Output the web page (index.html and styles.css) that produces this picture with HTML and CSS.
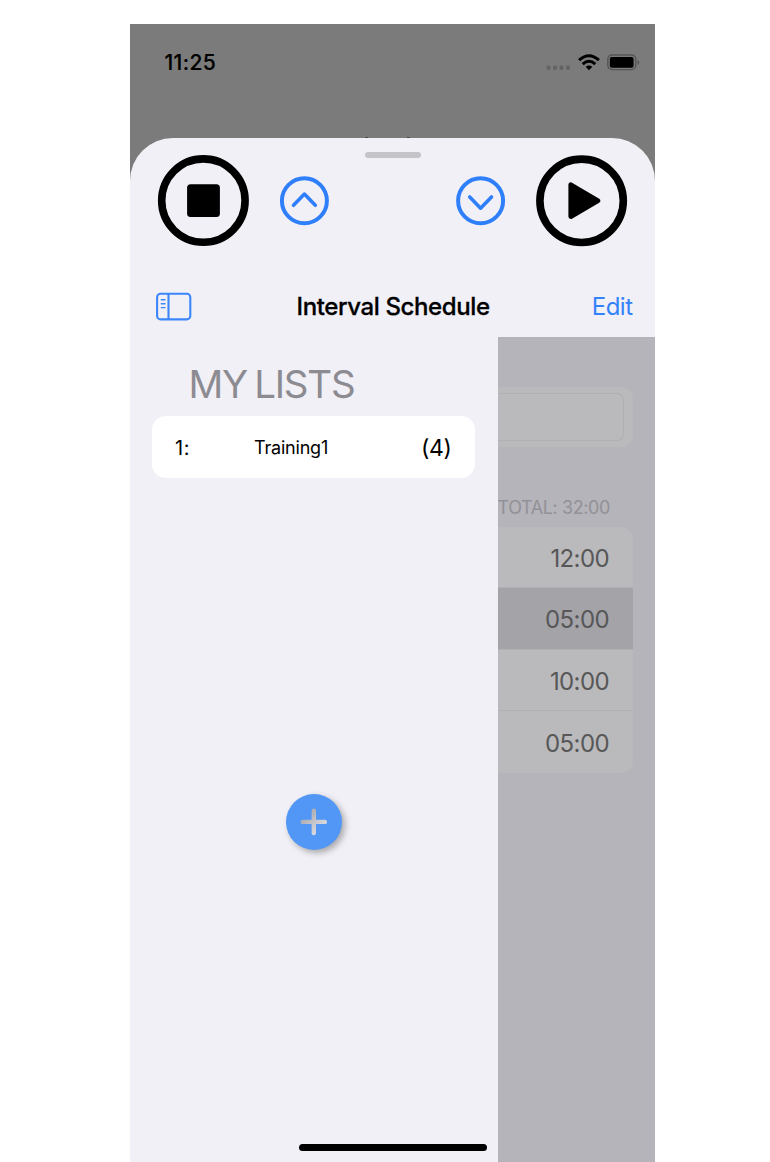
FILE: index.html
```html
<!DOCTYPE html>
<html lang="en">
<head>
<meta charset="utf-8">
<title>Interval Schedule</title>
<link rel="stylesheet" href="styles.css">
</head>
<body>
<main class="phone">
  <header class="status">
    <span class="clock">11:25</span>
    <div class="indicators">
      <svg class="signal" width="26" height="6" viewBox="0 0 26 6"><g fill="#646464"><rect x=".5" y=".5" width="4" height="4.4" rx="1.4"/><rect x="7" y=".5" width="4" height="4.4" rx="1.4"/><rect x="13.500" y=".5" width="4" height="4.4" rx="1.4"/><rect x="20" y=".5" width="4" height="4.4" rx="1.4"/></g></svg>
      <svg class="wifi" width="22" height="18" viewBox="0 0 22 18"><g fill="none" stroke="#000" stroke-width="3"><path d="M1.100 6.100Q11 -2.700 20.900 6.100"/><path d="M4.700 10.100Q11 4.500 17.300 10.100"/></g><path d="M7.700 12.700Q11 10.200 14.300 12.700L11 16.300Z"/></svg>
      <svg class="battery" width="33" height="17" viewBox="0 0 33 17"><rect x=".8" y="1" width="28" height="14.600" rx="4.300" fill="none" stroke="#555" stroke-width="1.400"/><rect x="2.800" y="3" width="23.800" height="10.800" rx="2"/><path d="M30.600 6v5q1.700-.7 1.700-2.500T30.600 6" fill="#555"/></svg>
    </div>
  </header>
  <div class="behind"><i></i><i></i></div>
  <section class="sheet">
    <div class="grabber"></div>
    <div class="controls">
      <svg class="stop" width="92" height="92" viewBox="0 0 92 92"><circle cx="46.400" cy="45.600" r="41.700" fill="none" stroke="#000" stroke-width="7.600"/><rect x="30.100" y="29.300" width="32.800" height="32.800" rx="3.500"/></svg>
      <svg class="up" width="50" height="50" viewBox="0 0 50 50"><g fill="none" stroke="#2f7ffb" stroke-width="4" stroke-linecap="round" stroke-linejoin="round"><circle cx="25.400" cy="24.700" r="22.500"/><path d="M14.500 29.300 25.400 18.100 36.300 29.300" stroke-width="3.600"/></g></svg>
      <svg class="down" width="50" height="50" viewBox="0 0 50 50"><g fill="none" stroke="#2f7ffb" stroke-width="4" stroke-linecap="round" stroke-linejoin="round"><circle cx="24.600" cy="24.700" r="22.500"/><path d="M13.700 21 24.600 32.200 35.500 21" stroke-width="3.600"/></g></svg>
      <svg class="play" width="92" height="92" viewBox="0 0 92 92"><circle cx="45.600" cy="45.800" r="41.700" fill="none" stroke="#000" stroke-width="7.600"/><path d="M34.800 29.800V61.600L62 45.700Z" stroke="#000" stroke-width="4.800" stroke-linejoin="round"/></svg>
    </div>
    <nav class="nav">
      <svg class="side-icon" width="37" height="29" viewBox="0 0 37 29"><g fill="none" stroke="#3b86fa" stroke-width="2.100"><rect x="2.100" y="1.800" width="33.200" height="25.600" rx="3.500"/><path d="M13.500 2v25"/><path d="M6.300 7.800h3.700M6.300 11.700h3.700M6.300 15.600h3.700" stroke-width="1.400" stroke-linecap="round"/></g></svg>
      <h1 class="title">Interval Schedule</h1>
      <a class="edit">Edit</a>
    </nav>
    <div class="content">
      <aside class="sidebar">
        <h2 class="heading">MY LISTS</h2>
        <div class="card">
          <span class="index">1:</span><span class="name">Training1</span><span class="count">(4)</span>
        </div>
        <button class="add"><svg width="56" height="56" viewBox="0 0 56 56"><defs><linearGradient id="plus" x1="0" y1="0" x2="1" y2="1"><stop offset=".2" stop-color="#aaabb0"/><stop offset=".8" stop-color="#dddde2"/></linearGradient></defs><path d="M25.600 16.800a2.200 2.200 0 0 1 4.400 0v8.900h8.900a2.200 2.200 0 0 1 0 4.400h-8.900v9a2.200 2.200 0 0 1-4.400 0v-9h-8.900a2.200 2.200 0 0 1 0-4.400h8.900Z" fill="url(#plus)"/></svg></button>
      </aside>
      <section class="detail">
        <div class="search"><div class="field"></div></div>
        <p class="total"><span>TOTAL: 32:00</span></p>
        <ul class="times">
          <li><span>12:00</span></li>
          <li class="selected"><span>05:00</span></li>
          <li><span>10:00</span></li>
          <li><span>05:00</span></li>
        </ul>
      </section>
      <div class="home"></div>
    </div>
  </section>
</main>
</body>
</html>
```
FILE: styles.css
```css
* { box-sizing: border-box; }
body { margin: 0; background: #fff; font-family: Inter, "Liberation Sans", sans-serif; color: #000; overflow: hidden; }
svg { display: block; flex: none; }
.phone { width: 525px; height: 1137.5px; margin: 24px 0 0 130px; background: #7b7b7b; display: flex; flex-direction: column; overflow: hidden; }
.status { height: 112px; flex: none; display: flex; justify-content: space-between; align-items: flex-start; padding: 26px 15px 0 34.5px; }
.clock { font-size: 21px; line-height: 26px; font-weight: 500; -webkit-text-stroke: 0.2px #000; letter-spacing: 0.4px; }
.indicators { display: flex; align-items: flex-start; padding-top: 4px; }
.signal { margin: 11px 6px 0 0; }
.wifi { margin-right: 7px; }
.behind { height: 2px; flex: none; display: flex; gap: 39px; padding: 1px 0 0 235px; }
.behind i { width: 3px; height: 1px; background: #4c4c4c; }
.sheet { flex: 1; background: #f1f0f6; border-radius: 43px 43px 0 0; display: flex; flex-direction: column; overflow: hidden; }
.grabber { width: 56px; height: 6px; flex: none; margin: 14px 0 0 235px; border-radius: 3px; background: #c5c4c9; }
.controls { height: 118px; flex: none; display: flex; align-items: flex-start; padding: 0 27px; margin-top: -3px; }
.up { margin: 21px 0 0 30px; }
.down { margin: 21px 0 0 auto; }
.play { margin-left: 30px; }
.nav { height: 64px; flex: none; display: grid; grid-template-columns: 141.5px 1fr auto; align-items: center; padding: 3px 22.5px 0 25px; }
.title { margin: 0; font-size: 24px; font-weight: 500; -webkit-text-stroke: 0.3px #000; line-height: 30px; white-space: nowrap; letter-spacing: -0.38px; }
.edit { font-size: 24px; line-height: 30px; letter-spacing: -0.5px; color: #3482fa; }
.content { flex: 1; display: flex; position: relative; }
.sidebar { width: 367.5px; padding: 22px 22.5px 0 22px; display: flex; flex-direction: column; }
.heading { margin: 0 0 7px 36.5px; font-size: 38.5px; line-height: 50px; font-weight: 400; color: #8c8b91; letter-spacing: -1.2px; word-spacing: -2.5px; white-space: nowrap; }
.card { height: 62px; border-radius: 14px; background: #fff; display: grid; grid-template-columns: 79px 1fr auto; align-items: center; padding: 1px 23.5px 0 23px; }
.index { font-size: 20px; letter-spacing: 0.5px; }
.name { font-size: 18px; letter-spacing: -0.2px; }
.count { font-size: 23px; letter-spacing: -0.4px; }
.add { width: 56px; height: 56px; margin: 316px 0 0 134px; padding: 0; border: 0; border-radius: 50%; background: #5297f5; box-shadow: 3px 3px 6px #0000004d; }
.detail { flex: 1; background: #b5b4ba; padding-top: 50px; overflow: hidden; }
.search { height: 60px; margin-right: 22.5px; border-radius: 0 12px 12px 0; background: #bababc; padding: 6px 8.5px 6px 0; }
.field { height: 48px; border: 1px solid #b0b0b3; border-left: 0; border-radius: 0 7px 7px 0; }
.total { margin: 49px 45px 0 0; height: 24px; display: flex; justify-content: flex-end; white-space: nowrap; font-size: 18px; line-height: 24px; letter-spacing: -0.4px; color: #929197; }
.times { list-style: none; margin: 6.5px 22.5px 0 0; padding: 0; background: #bababc; border-radius: 0 13px 13px 0; overflow: hidden; }
.times li { height: 61.6px; display: flex; align-items: center; justify-content: flex-end; padding: 3px 23.5px 0 0; font-size: 24px; letter-spacing: -0.6px; color: #575758; border-bottom: 1px solid #b0b0b3; }
.times li.selected { background: #a4a3a8; }
.times li:last-child { border: 0; padding-top: 2px; }
.home { position: absolute; left: 169px; bottom: 10.5px; width: 188px; height: 7px; border-radius: 4px; background: #000; }
```
